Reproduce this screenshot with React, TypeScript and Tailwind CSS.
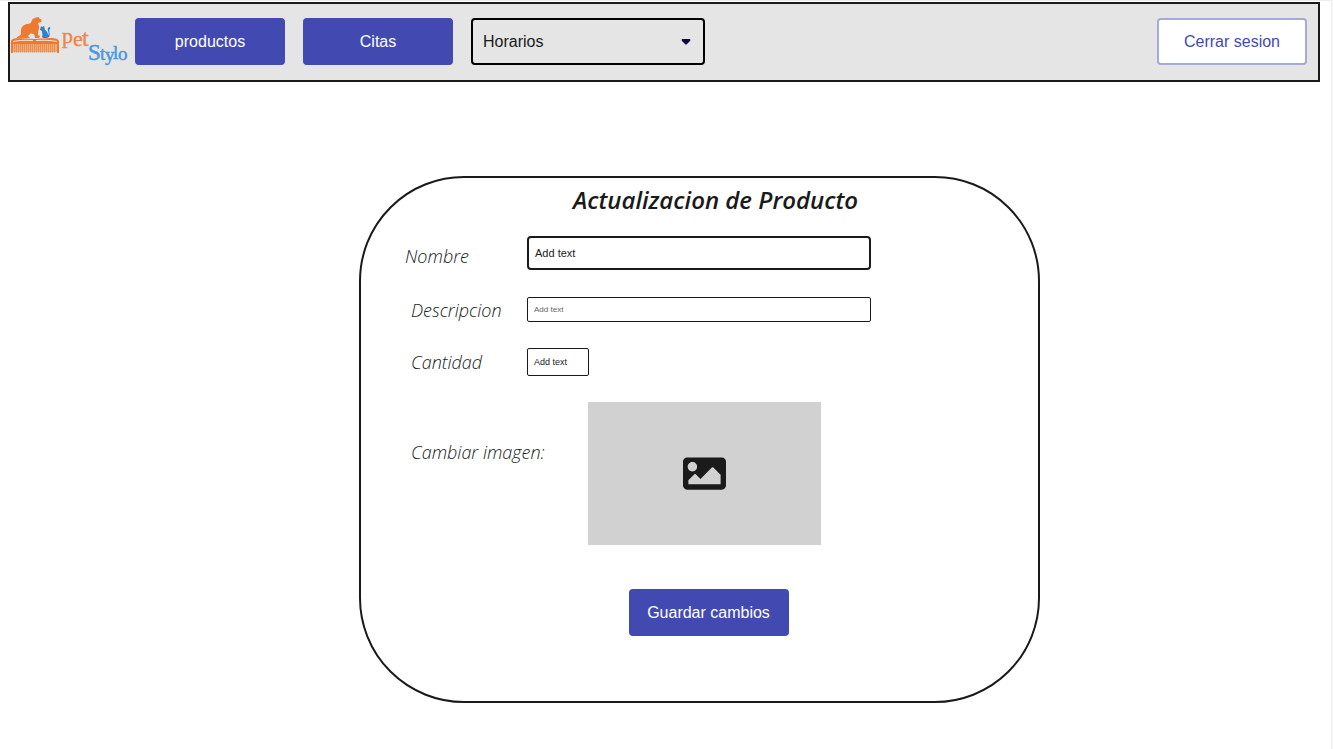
import type { ComponentProps } from "react";
import { FaImage } from "react-icons/fa";

const combTeeth = Array.from({ length: 21 }, (_, i) => 4 + i * 2);

function Logo() {
  return (
    <svg className="h-14 w-[123px] shrink-0" viewBox="0 0 123 56" role="img" aria-label="Pet Stylo">
      <g fill="#ec7b31">
        <path d="M7 23 C8 22 10 22 11 20 C10 15 12 11 17 10 C20 10 21 9 22 6 C23 4 25 4 28 3 C29 3 29 4 30 5 C32 5 32 7 31 8 L28 9 C28 11 30 12 29 15 C28 17 28 19 28 21 L30 22 L29 24 L25 24 L24 20 C22 20 21 19 20 20 L18 22 L20 24 L7 24 Z" />
        <path d="M1 27 Q2 24 8 24 L24 25 L41 24 Q48 24 49 27 L49 39 L47 39 L47 31 L3 31 L3 39 L1 39 Z" />
        <rect x="3" y="30" width="44" height="8" fill="#f3ad80" />
      </g>
      <path
        d="M3 27 Q13 25 23 26 L23 27 Q13 26 3 28 Z M26 26 Q37 25 47 27 L47 28 Q37 26 26 27 Z"
        fill="#f7e4d8"
      />
      {combTeeth.map((x) => (
        <rect key={x} x={x} y="30" width="1.2" height="8.5" fill="#ee8f52" />
      ))}
      <path
        d="M32 23 C33 21 32 19 32 17 L30 16 L31 12 L32 13 L34 12 L35 16 C37 17 38 19 38 21 C40 20 37 16 38 14 C39 12 41 13 40 15 C38 17 41 20 39 23 L37 24 L33 24 Z"
        fill="#2e80cd"
      />
      <g fill="#ef8748" stroke="#ef8748" strokeWidth="0.4" fontFamily="'Liberation Serif', serif" fontSize="22">
        <text x="52" y="29">p</text>
        <text x="63" y="32">e</text>
        <text x="72" y="32" fontSize="24">t</text>
      </g>
      <g fill="#4a97df" stroke="#4a97df" strokeWidth="0.5" fontFamily="'Liberation Serif', serif" fontSize="19">
        <text x="78" y="46" fontSize="23">S</text>
        <text x="90" y="46">t</text>
        <text x="95" y="47">y</text>
        <text x="103" y="45">l</text>
        <text x="108" y="46">o</text>
      </g>
    </svg>
  );
}

function PrimaryButton({ className = "w-[150px]", ...props }: ComponentProps<"button">) {
  return (
    <button
      type="button"
      className={`h-[47px] shrink-0 rounded bg-[#424ab1] text-base text-white ${className}`}
      {...props}
    />
  );
}

const labelStyle = "font-['Open_Sans'] text-lg font-light italic leading-6 text-[#1a1a1a]";

export default function App() {
  return (
    <div className="min-h-screen border-t border-r-2 border-t-[#ececec] border-r-[#f1f1f1] bg-white pt-px font-['Liberation_Sans',sans-serif] text-[#1a1a1a]">
      <header className="mr-[11px] ml-2 flex h-20 items-center justify-between border-2 border-[#1a1a1a] bg-[#e5e5e5] pr-[11px] pb-px">
        <nav className="flex items-center gap-[18px]">
          <div className="flex items-center gap-0.5">
            <Logo />
            <PrimaryButton>productos</PrimaryButton>
          </div>
          <PrimaryButton>Citas</PrimaryButton>
          <div className="relative">
            <select
              aria-label="Horarios"
              className="h-[47px] w-[234px] appearance-none rounded border-2 border-black bg-transparent px-2.5 text-base"
            >
              <option>Horarios</option>
            </select>
            <svg className="pointer-events-none absolute top-[21px] right-3.5 h-1.5 w-2.5" viewBox="0 0 10 6" aria-hidden="true">
              <path d="M1 0H9Q10 1 9 2L6 5Q5 6 4 5L1 2Q0 1 1 0Z" fill="#0c0740" />
            </svg>
          </div>
        </nav>
        <button
          type="button"
          className="h-[47px] w-[150px] shrink-0 rounded border-2 border-[#a5a9dc] bg-white text-base text-[#424ab1]"
        >
          Cerrar sesion
        </button>
      </header>

      <main className="flex justify-center pt-[94px] pl-[68px]">
        <form className="w-full max-w-[681px] rounded-[105px] border-2 border-[#1a1a1a] pt-1.5 pb-[65px]">
          <h1 className="pl-8 text-center font-['Open_Sans'] text-2xl leading-8 font-semibold italic">
            Actualizacion de Producto
          </h1>
          <div className="mt-5 grid grid-cols-[122px_344px] pl-11">
            <label htmlFor="nombre" className={`${labelStyle} pt-2`}>Nombre</label>
            <input
              id="nombre"
              placeholder="Add text"
              className="h-[34px] rounded-sm border-2 border-[#1a1a1a] px-1.5 text-[11px] placeholder:text-[#1a1a1a]"
            />
          </div>
          <div className="mt-[27px] grid grid-cols-[116px_344px] items-center gap-y-[26px] pl-[50px]">
            <label htmlFor="descripcion" className={labelStyle}>Descripcion</label>
            <input
              id="descripcion"
              placeholder="Add text"
              className="h-[25px] rounded-xs border border-[#1a1a1a] px-1.5 text-[8px] placeholder:text-[#666]"
            />
            <label htmlFor="cantidad" className={labelStyle}>Cantidad</label>
            <input
              id="cantidad"
              placeholder="Add text"
              className="h-7 w-[62px] rounded-xs border border-[#1a1a1a] px-1.5 text-[9px] placeholder:text-[#1a1a1a]"
            />
          </div>
          <div className="mt-[26px] grid grid-cols-[177px_233px] pl-[50px]">
            <label htmlFor="imagen" className={`${labelStyle} pt-[38px]`}>Cambiar imagen:</label>
            <button
              id="imagen"
              type="button"
              className="flex h-[143px] items-center justify-center bg-[#d1d1d1]"
            >
              <FaImage className="size-[43px]" aria-hidden="true" />
            </button>
          </div>
          <div className="mt-11 flex justify-center pl-[18px]">
            <PrimaryButton className="w-40">Guardar cambios</PrimaryButton>
          </div>
        </form>
      </main>
    </div>
  );
}
